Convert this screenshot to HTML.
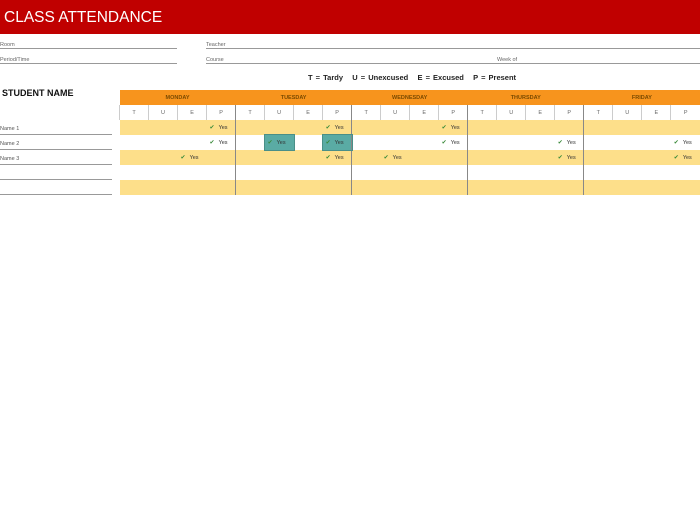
<!DOCTYPE html>
<html><head><meta charset="utf-8"><style>
*{margin:0;padding:0;box-sizing:border-box}
body{width:700px;height:525px;background:#fff;font-family:"Liberation Sans",sans-serif;position:relative;overflow:hidden}
.hdr{position:absolute;left:0;top:0;width:700px;height:34px;background:#c00000;color:#fff;font-size:15.5px;padding:9px 0 0 4px}
.lbl{position:absolute;font-size:5.5px;color:#666;border-bottom:1px solid #999;height:9px;padding-top:2px}
.legend{position:absolute;left:308px;top:73px;font-size:7.5px;font-weight:bold;color:#222;word-spacing:1px}
.sn{position:absolute;left:2px;top:88px;font-size:9px;font-weight:bold;color:#111}
.nm{position:absolute;left:0;width:112px;height:15px;border-bottom:1px solid #999;font-size:5.5px;color:#555;padding-top:6px}
table{position:absolute;left:119px;top:90px;width:581px;border-collapse:collapse;table-layout:fixed}
td{height:15px;font-size:5.5px;color:#666;text-align:center;padding:0;border-left:1px solid #ddd;white-space:nowrap}
tr.days td{background:#f7941d;color:#7a4a00;font-size:5.5px;font-weight:bold;border:none}
tr.sub td{background:#fff;border-left:1px solid #ccc}
tr.y td{background:#fddf8a;border-left:none}
tr.w td{background:#fff;border-left:none}
td.d{border-left:1px solid #888 !important}
td.c{text-align:left;padding-left:3px;color:#333}
td.c::before{content:"✔";color:#3a8a3a;margin-right:4px;font-size:6px}
td.t{background:#5aaba4 !important;outline:1px solid #4a8f88}
</style></head><body>
<div class="hdr">CLASS ATTENDANCE</div>
<div class="lbl" style="left:0;top:40px;width:177px">Room</div>
<div class="lbl" style="left:0;top:55px;width:177px">Period/Time</div>
<div class="lbl" style="left:206px;top:40px;width:494px">Teacher</div>
<div class="lbl" style="left:206px;top:55px;width:494px">Course<span style="position:absolute;left:291px">Week of</span></div>
<div class="legend">T = Tardy &nbsp; U = Unexcused &nbsp; E = Excused &nbsp; P = Present</div>
<div class="sn">STUDENT NAME</div>
<div class="nm" style="top:120px">Name 1</div>
<div class="nm" style="top:135px">Name 2</div>
<div class="nm" style="top:150px">Name 3</div>
<div class="nm" style="top:165px"></div>
<div class="nm" style="top:180px"></div>
<table>
<tr class="days"><td colspan="4">MONDAY</td><td colspan="4">TUESDAY</td><td colspan="4">WEDNESDAY</td><td colspan="4">THURSDAY</td><td colspan="4">FRIDAY</td></tr>
<tr class="sub"><td>T</td><td>U</td><td>E</td><td>P</td><td class="d">T</td><td>U</td><td>E</td><td>P</td><td class="d">T</td><td>U</td><td>E</td><td>P</td><td class="d">T</td><td>U</td><td>E</td><td>P</td><td class="d">T</td><td>U</td><td>E</td><td>P</td></tr>
<tr class="y"><td></td><td></td><td></td><td class="c">Yes</td><td class="d"></td><td></td><td></td><td class="c">Yes</td><td class="d"></td><td></td><td></td><td class="c">Yes</td><td class="d"></td><td></td><td></td><td></td><td class="d"></td><td></td><td></td><td></td></tr>
<tr class="w"><td></td><td></td><td></td><td class="c">Yes</td><td class="d"></td><td class="c t">Yes</td><td></td><td class="c t">Yes</td><td class="d"></td><td></td><td></td><td class="c">Yes</td><td class="d"></td><td></td><td></td><td class="c">Yes</td><td class="d"></td><td></td><td></td><td class="c">Yes</td></tr>
<tr class="y"><td></td><td></td><td class="c">Yes</td><td></td><td class="d"></td><td></td><td></td><td class="c">Yes</td><td class="d"></td><td class="c">Yes</td><td></td><td></td><td class="d"></td><td></td><td></td><td class="c">Yes</td><td class="d"></td><td></td><td></td><td class="c">Yes</td></tr>
<tr class="w"><td></td><td></td><td></td><td></td><td class="d"></td><td></td><td></td><td></td><td class="d"></td><td></td><td></td><td></td><td class="d"></td><td></td><td></td><td></td><td class="d"></td><td></td><td></td><td></td></tr>
<tr class="y"><td></td><td></td><td></td><td></td><td class="d"></td><td></td><td></td><td></td><td class="d"></td><td></td><td></td><td></td><td class="d"></td><td></td><td></td><td></td><td class="d"></td><td></td><td></td><td></td></tr>
</table>
</body></html>
